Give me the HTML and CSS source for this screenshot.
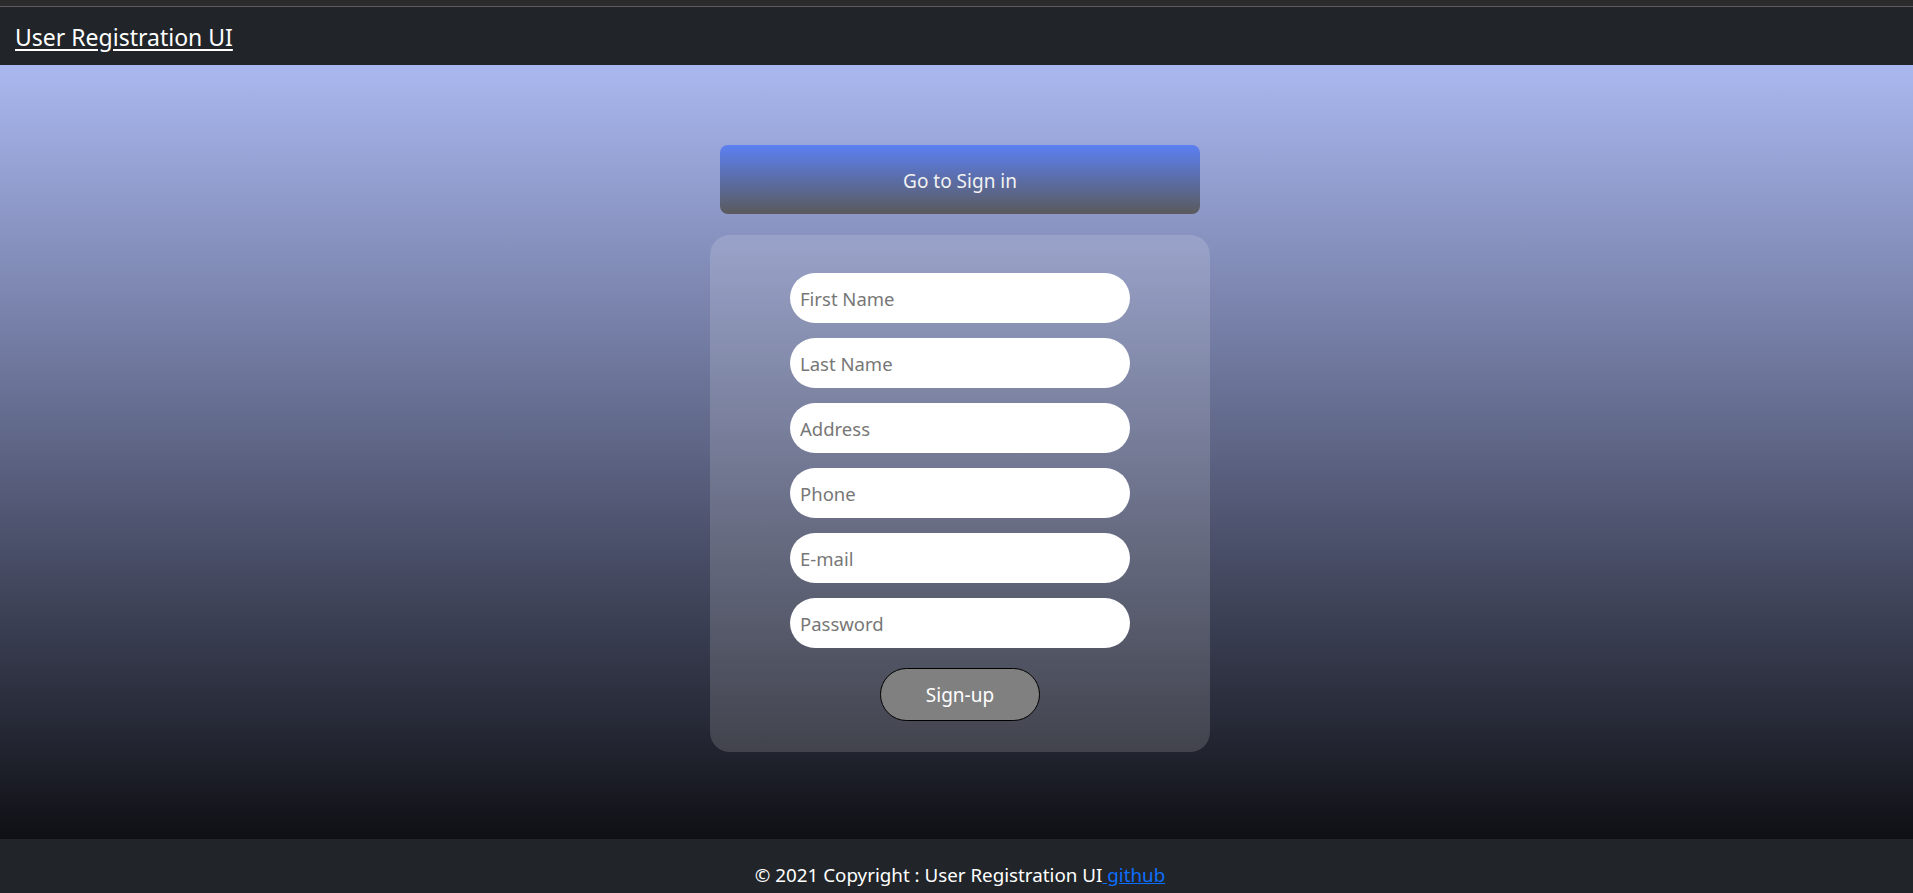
FILE: index.html
```html
<!DOCTYPE html>
<html lang="en">
<head>
<meta charset="utf-8">
<title>User Registration UI</title>
<link rel="stylesheet" href="styles.css">
</head>
<body>
<div class="chrome"></div>
<nav class="navbar"><a class="brand" href="#">User Registration UI</a></nav>
<main class="main">
  <button class="goto" type="button">Go to Sign in</button>
  <form class="card">
    <input class="field" type="text" placeholder="First Name">
    <input class="field" type="text" placeholder="Last Name">
    <input class="field" type="text" placeholder="Address">
    <input class="field" type="text" placeholder="Phone">
    <input class="field" type="email" placeholder="E-mail">
    <input class="field" type="password" placeholder="Password">
    <button class="signup" type="button">Sign-up</button>
  </form>
</main>
<footer class="footer">© 2021 Copyright : User Registration UI<a class="gh" href="#">&nbsp;github</a></footer>
</body>
</html>
```
FILE: styles.css
```css
html, body {
  margin: 0;
  padding: 0;
}
body {
  font-family: "Noto Sans", "Open Sans", sans-serif;
  background: #212529;
  color: #fff;
}
.chrome {
  height: 6px;
  background: #2b2b2b;
  border-bottom: 1px solid #5c5c5c;
}
.navbar {
  height: 58px;
  background: #212529;
  display: flex;
  align-items: center;
  padding-left: 15px;
}
.brand {
  color: #fff;
  font-size: 23px;
  text-decoration: underline;
  text-underline-offset: 3px;
  line-height: 1;
  margin-top: 2px;
}
.main {
  height: 774px;
  box-sizing: border-box;
  background: linear-gradient(to bottom, #aab8f0 0%, #5d6484 50%, #0f1015 100%);
  display: flex;
  flex-direction: column;
  align-items: center;
  padding-top: 80px;
  padding-left: 7px;
}
.goto {
  width: 480px;
  height: 69px;
  border: none;
  border-radius: 8px;
  background: linear-gradient(to bottom, #5c80f3 0%, #5a5a5c 100%);
  color: #f2f2f2;
  font-family: inherit;
  font-size: 19px;
  padding: 0;
  padding-top: 2px;
}
.card {
  margin-top: 21px;
  width: 500px;
  box-sizing: border-box;
  padding: 38px 0 31px;
  border-radius: 20px;
  background: rgba(255, 255, 255, 0.15);
  display: flex;
  flex-direction: column;
  align-items: center;
  gap: 15px;
}
.field {
  width: 340px;
  height: 50px;
  box-sizing: border-box;
  border: none;
  border-radius: 25px;
  background: #fff;
  padding: 0 10px;
  font-family: inherit;
  font-size: 18.5px;
  color: #333;
  outline: none;
}
.field::placeholder {
  color: #777;
}
.signup {
  margin-top: 5px;
  width: 160px;
  height: 53px;
  border: 1px solid #000;
  border-radius: 27px;
  background: #808080;
  color: #fff;
  font-family: inherit;
  font-size: 19px;
  padding: 0;
}
.footer {
  background: #212529;
  text-align: center;
  font-size: 18.8px;
  line-height: 30px;
  padding: 21px 0 20px 7px;
  color: #fff;
}
.gh {
  color: #0d6efd;
  text-decoration: underline;
}
```
